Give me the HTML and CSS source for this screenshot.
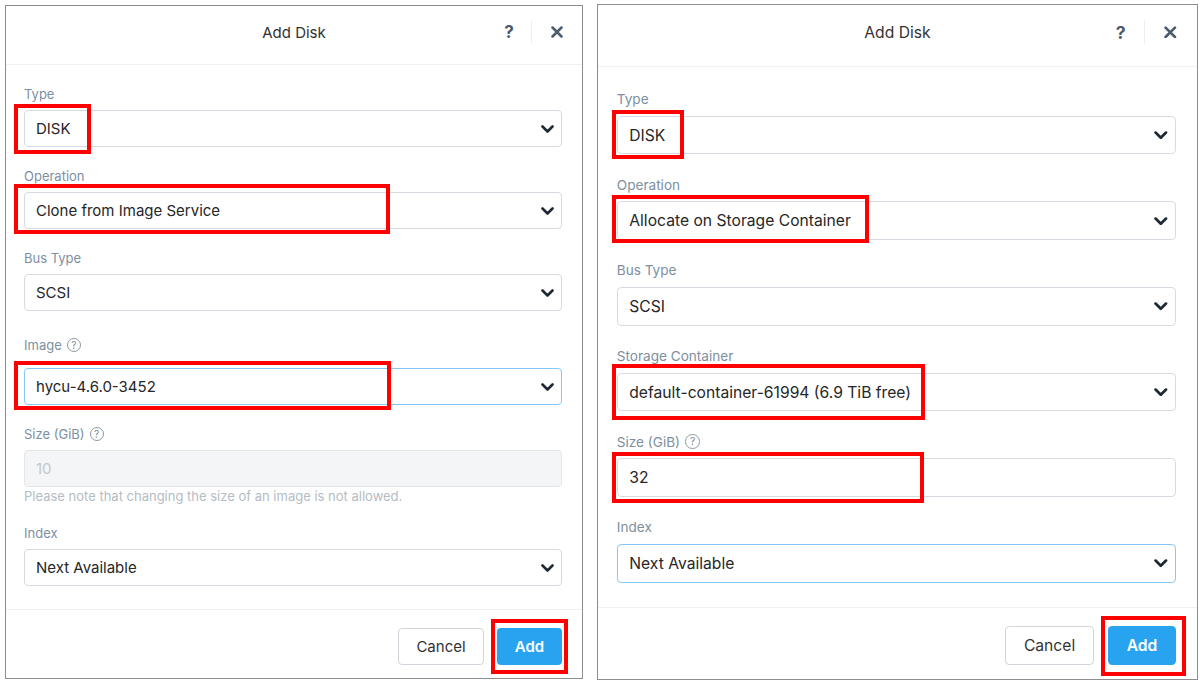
FILE: index.html
```html
<!DOCTYPE html>
<html>
<head>
    <title>Add Disk</title>
    <link rel="stylesheet" href="styles.css">
</head>
<body>
    <div class="screens">
        <!-- clone from image -->
        <div class="dialog">
            <div class="dialog-header">
                <div class="dialog-title">Add Disk</div>
                <div class="header-actions">
                    <span class="header-help">?</span>
                    <span class="header-close">
                        <svg viewBox="0 0 12 12" width="12" height="12"><path d="M1.5 1.5 L10.5 10.5 M10.5 1.5 L1.5 10.5" stroke="#4b5b6b" stroke-width="2.5" stroke-linecap="round"/></svg>
                    </span>
                </div>
            </div>
            <div class="dialog-body">
                <div class="field">
                    <div class="field-label">Type</div>
                    <div class="select">
                        <span>DISK</span>
                        <svg class="chevron" viewBox="0 0 13 8" width="13" height="8"><path d="M1.5 1.5 L6.5 6.5 L11.5 1.5" fill="none" stroke="#1f2933" stroke-width="2.6" stroke-linecap="round" stroke-linejoin="round"/></svg>
                        <div class="mark mark-disk"></div>
                    </div>
                </div>
                <div class="field">
                    <div class="field-label">Operation</div>
                    <div class="select">
                        <span>Clone from Image Service</span>
                        <svg class="chevron" viewBox="0 0 13 8" width="13" height="8"><path d="M1.5 1.5 L6.5 6.5 L11.5 1.5" fill="none" stroke="#1f2933" stroke-width="2.6" stroke-linecap="round" stroke-linejoin="round"/></svg>
                        <div class="mark mark-op"></div>
                    </div>
                </div>
                <div class="field">
                    <div class="field-label">Bus Type</div>
                    <div class="select">
                        <span>SCSI</span>
                        <svg class="chevron" viewBox="0 0 13 8" width="13" height="8"><path d="M1.5 1.5 L6.5 6.5 L11.5 1.5" fill="none" stroke="#1f2933" stroke-width="2.6" stroke-linecap="round" stroke-linejoin="round"/></svg>
                    </div>
                </div>
                <div class="field field--offset">
                    <div class="field-label">Image <span class="help">?</span></div>
                    <div class="select is-focused">
                        <span>hycu-4.6.0-3452</span>
                        <svg class="chevron" viewBox="0 0 13 8" width="13" height="8"><path d="M1.5 1.5 L6.5 6.5 L11.5 1.5" fill="none" stroke="#1f2933" stroke-width="2.6" stroke-linecap="round" stroke-linejoin="round"/></svg>
                        <div class="mark mark-image"></div>
                    </div>
                </div>
                <div class="field">
                    <div class="field-label">Size (GiB) <span class="help">?</span></div>
                    <div class="select is-disabled">
                        <span>10</span>
                    </div>
                    <div class="field-note">Please note that changing the size of an image is not allowed.</div>
                </div>
                <div class="field">
                    <div class="field-label">Index</div>
                    <div class="select">
                        <span>Next Available</span>
                        <svg class="chevron" viewBox="0 0 13 8" width="13" height="8"><path d="M1.5 1.5 L6.5 6.5 L11.5 1.5" fill="none" stroke="#1f2933" stroke-width="2.6" stroke-linecap="round" stroke-linejoin="round"/></svg>
                    </div>
                </div>
            </div>
            <div class="dialog-footer">
                <button class="btn btn-cancel">Cancel</button>
                <button class="btn btn-add">Add<span class="mark mark-add"></span></button>
            </div>
        </div>

        <!-- allocate on storage container -->
        <div class="dialog dialog--wide">
            <div class="dialog-header">
                <div class="dialog-title">Add Disk</div>
                <div class="header-actions">
                    <span class="header-help">?</span>
                    <span class="header-close">
                        <svg viewBox="0 0 12 12" width="12" height="12"><path d="M1.5 1.5 L10.5 10.5 M10.5 1.5 L1.5 10.5" stroke="#4b5b6b" stroke-width="2.5" stroke-linecap="round"/></svg>
                    </span>
                </div>
            </div>
            <div class="dialog-body">
                <div class="field">
                    <div class="field-label">Type</div>
                    <div class="select">
                        <span>DISK</span>
                        <svg class="chevron" viewBox="0 0 13 8" width="13" height="8"><path d="M1.5 1.5 L6.5 6.5 L11.5 1.5" fill="none" stroke="#1f2933" stroke-width="2.6" stroke-linecap="round" stroke-linejoin="round"/></svg>
                        <div class="mark mark-disk"></div>
                    </div>
                </div>
                <div class="field">
                    <div class="field-label">Operation</div>
                    <div class="select">
                        <span>Allocate on Storage Container</span>
                        <svg class="chevron" viewBox="0 0 13 8" width="13" height="8"><path d="M1.5 1.5 L6.5 6.5 L11.5 1.5" fill="none" stroke="#1f2933" stroke-width="2.6" stroke-linecap="round" stroke-linejoin="round"/></svg>
                        <div class="mark mark-op"></div>
                    </div>
                </div>
                <div class="field">
                    <div class="field-label">Bus Type</div>
                    <div class="select">
                        <span>SCSI</span>
                        <svg class="chevron" viewBox="0 0 13 8" width="13" height="8"><path d="M1.5 1.5 L6.5 6.5 L11.5 1.5" fill="none" stroke="#1f2933" stroke-width="2.6" stroke-linecap="round" stroke-linejoin="round"/></svg>
                    </div>
                </div>
                <div class="field">
                    <div class="field-label">Storage Container</div>
                    <div class="select">
                        <span>default-container-61994 (6.9 TiB free)</span>
                        <svg class="chevron" viewBox="0 0 13 8" width="13" height="8"><path d="M1.5 1.5 L6.5 6.5 L11.5 1.5" fill="none" stroke="#1f2933" stroke-width="2.6" stroke-linecap="round" stroke-linejoin="round"/></svg>
                        <div class="mark mark-storage"></div>
                    </div>
                </div>
                <div class="field">
                    <div class="field-label">Size (GiB) <span class="help">?</span></div>
                    <div class="select">
                        <span>32</span>
                        <div class="mark mark-size"></div>
                    </div>
                </div>
                <div class="field">
                    <div class="field-label">Index</div>
                    <div class="select is-focused">
                        <span>Next Available</span>
                        <svg class="chevron" viewBox="0 0 13 8" width="13" height="8"><path d="M1.5 1.5 L6.5 6.5 L11.5 1.5" fill="none" stroke="#1f2933" stroke-width="2.6" stroke-linecap="round" stroke-linejoin="round"/></svg>
                    </div>
                </div>
            </div>
            <div class="dialog-footer">
                <button class="btn btn-cancel">Cancel</button>
                <button class="btn btn-add">Add<span class="mark mark-add"></span></button>
            </div>
        </div>
    </div>
</body>
</html>
```

FILE: styles.css
```css
* {
    box-sizing: border-box;
}
body {
    font-family: Inter, Lato, sans-serif;
    background-color: #ffffff;
    margin: 0;
    padding: 4px 0 0 5px;
}
.screens {
    display: flex;
    align-items: flex-start;
    gap: 14px;
}
.dialog {
    width: 578px;
    margin-top: 1px;
    border: 1px solid #8d8d8d;
    background: #ffffff;
}
.dialog--wide {
    width: 575px;
    margin-top: 0;
    zoom: 1.045;
}
.dialog-header {
    display: grid;
    grid-template-columns: 1fr auto 1fr;
    align-items: center;
    height: 59px;
    padding-bottom: 6px;
    border-bottom: 1px solid #eef0f2;
}
.dialog-title {
    grid-column: 2;
    font-size: 15px;
    color: #333333;
}
.header-actions {
    grid-column: 3;
    justify-self: end;
    display: flex;
    align-items: center;
}
.header-help {
    width: 44px;
    text-align: center;
    font-size: 17px;
    font-weight: bold;
    color: #4b5b6b;
}
.header-close {
    width: 51px;
    height: 23px;
    border-left: 1px solid #eceef0;
    display: flex;
    align-items: center;
    justify-content: center;
}
.dialog-body {
    padding: 20px 20px 3px 18px;
}
.dialog--wide .dialog-body {
    padding-top: 22px;
}
.field {
    margin-bottom: 20px;
}
.field--offset {
    padding-top: 5px;
}
.field-label {
    display: flex;
    align-items: center;
    gap: 5px;
    height: 18px;
    margin-bottom: 7px;
    font-size: 13px;
    color: #7d8fa1;
}
.field--offset .field-label {
    margin-bottom: 14px;
}
.help {
    width: 14px;
    height: 14px;
    border: 1.3px solid #8d99a5;
    border-radius: 50%;
    display: inline-flex;
    align-items: center;
    justify-content: center;
    font-size: 10px;
    color: #7d8b99;
}
.select {
    position: relative;
    height: 37px;
    border: 1px solid #d6dbe1;
    border-radius: 4px;
    display: flex;
    align-items: center;
    justify-content: space-between;
    padding: 0 7px 0 11px;
    font-size: 15px;
    color: #262626;
}
.select.is-focused {
    border-color: #86c7f3;
}
.select.is-disabled {
    background-color: #f4f5f6;
    border-color: #e3e6e9;
    color: #c3c8cd;
}
.field-note {
    margin-top: 2px;
    font-size: 13px;
    line-height: 15px;
    color: #b5bcc3;
}
.dialog-footer {
    display: flex;
    justify-content: flex-end;
    gap: 13px;
    padding: 18px 20px 13px;
    border-top: 1px solid #eef0f2;
}
.btn {
    position: relative;
    height: 37px;
    border-radius: 4px;
    font-family: inherit;
    font-size: 15px;
    cursor: pointer;
}
.btn-cancel {
    width: 86px;
    background: #ffffff;
    border: 1px solid #cfd5db;
    color: #333333;
}
.btn-add {
    width: 65px;
    background: #27a3f0;
    border: none;
    color: #ffffff;
    font-weight: 600;
}

/* red callouts drawn on the screenshots */
.mark {
    position: absolute;
    border: 4px solid #ff0000;
    pointer-events: none;
}
.mark-disk {
    left: -11px;
    top: -7px;
    width: 77px;
    height: 50px;
}
.mark-op {
    left: -11px;
    top: -9px;
    width: 376px;
    height: 50px;
}
.mark-image {
    left: -11px;
    top: -8px;
    width: 377px;
    height: 49px;
}
.mark-add {
    left: -6px;
    top: -9px;
    width: 77px;
    height: 55px;
}
.dialog--wide .mark-disk {
    left: -6px;
    top: -6px;
    width: 69px;
    height: 46px;
}
.dialog--wide .mark-op {
    left: -6px;
    top: -7px;
    width: 246px;
    height: 46px;
}
.mark-storage {
    left: -6px;
    top: -9px;
    width: 300px;
    height: 53px;
}
.mark-size {
    left: -6px;
    top: -7px;
    width: 299px;
    height: 49px;
}
.dialog--wide .mark-add {
    left: -7px;
    top: -10px;
    width: 82px;
    height: 57px;
}
```
